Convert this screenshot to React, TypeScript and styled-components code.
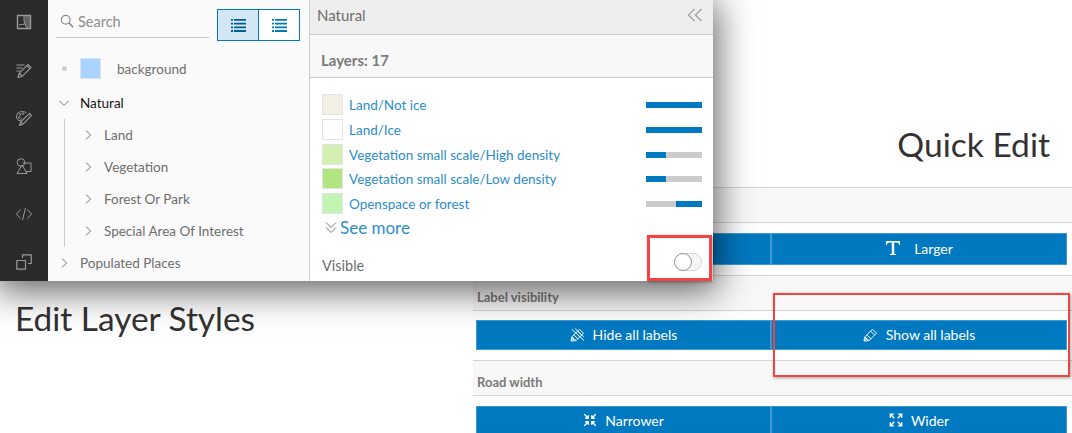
import { ReactNode } from "react"
import styled, { createGlobalStyle } from "styled-components"

const GlobalStyle = createGlobalStyle`
    html, body {
        margin: 0;
        padding: 0;
        background: #fff;
        font-family: Lato, "Open Sans", sans-serif;
    }
`

const Page = styled.div`
    position: relative;
    display: grid;
    grid-template-columns: 473px 1fr;
    width: 1072px;
    height: 433px;
    overflow: hidden;
    background: #fff;
`

const Window = styled.div`
    position: absolute;
    top: 0;
    left: 0;
    z-index: 2;
    display: flex;
    width: 713px;
    height: 281px;
    background: #fff;
    box-shadow: 0 6px 34px 4px rgba(0, 0, 0, 0.62);
`

const Rail = styled.div`
    display: flex;
    flex-direction: column;
    flex: 0 0 48px;
    margin-top: -2px;
    background: #2b2b2b;
`

const RailItem = styled.div`
    display: flex;
    flex: 0 0 48px;
    align-items: center;
    justify-content: center;
    color: #9a9a9a;
`

const LayerPane = styled.div`
    flex: 0 0 260px;
    background: #fafafa;
    color: #6e6e6e;
`

const SearchBar = styled.div`
    display: flex;
    gap: 8px;
    height: 49px;
    padding: 9px 9px 0 8px;
    box-sizing: border-box;
`

const SearchField = styled.div`
    display: flex;
    align-items: center;
    gap: 4px;
    width: 153px;
    height: 29px;
    padding: 0 0 4px 4px;
    box-sizing: border-box;
    border-bottom: 1px solid #c8c8c8;
    font-size: 14.5px;
    color: #8c8c8c;
`

const ViewToggle = styled.div`
    display: flex;
    width: 83px;
    height: 32px;
    box-sizing: border-box;
    border: 1px solid #0079c1;
`

const ViewButton = styled.div<{ $active?: boolean }>`
    display: flex;
    flex: 1;
    align-items: center;
    justify-content: center;
    color: ${(p) => (p.$active ? "#005e95" : "#0079c1")};
    background: ${(p) => (p.$active ? "#d2e6f5" : "#fff")};
    & + & {
        border-left: 1px solid #0079c1;
    }
`

const TreeRow = styled.div<{ $selected?: boolean }>`
    display: flex;
    align-items: center;
    gap: 10px;
    height: 32px;
    padding-left: 10px;
    font-size: 13.5px;
    color: ${(p) => (p.$selected ? "#151515" : "#6e6e6e")};
`

const BasemapRow = styled.div`
    display: flex;
    align-items: center;
    height: 38px;
    padding-left: 14px;
    font-size: 13.5px;
`

const BasemapName = styled.span`
    padding-top: 2px;
`

const Dot = styled.span`
    width: 5px;
    height: 5px;
    margin-right: 13px;
    border-radius: 50%;
    background: #d0d0d0;
`

const BasemapSwatch = styled.span`
    width: 19px;
    height: 19px;
    margin-right: 16px;
    border: 1px solid #d8e4ee;
    background: #a8d4fd;
`

const Nested = styled.div`
    margin-left: 16px;
    padding-left: 7px;
    border-left: 1px solid #ccc;
`

const DetailPane = styled.div`
    display: flex;
    flex-direction: column;
    flex: 1;
    border-left: 1px solid #ccc;
    background: #fff;
`

const PaneHeader = styled.div`
    display: flex;
    align-items: center;
    justify-content: space-between;
    flex: 0 0 35px;
    padding: 0 10px 4px 7px;
    box-sizing: border-box;
    border-bottom: 1px solid #ccc;
    background: #eee;
    font-size: 15px;
    color: #6e6e6e;
`

const LayerCount = styled.div`
    display: flex;
    align-items: flex-end;
    flex: 0 0 43px;
    padding: 0 0 8px 11px;
    box-sizing: border-box;
    border-bottom: 1px solid #ccc;
    background: #f8f8f8;
    font-size: 15px;
    font-weight: 700;
    color: #7a7a7a;
`

const LegendList = styled.div`
    padding: 16px 11px 0 12px;
`

const LegendRow = styled.div`
    display: flex;
    align-items: flex-start;
    height: 24.75px;
`

const LegendSwatch = styled.span<{ $color: string }>`
    flex: 0 0 auto;
    width: 19px;
    height: 19px;
    margin-right: 6px;
    border: 1px solid #e4e4e4;
    background: ${(p) => p.$color};
`

const LegendName = styled.span`
    flex: 1;
    line-height: 22px;
    font-size: 13.5px;
    color: #2b8dcb;
`

const ScaleBar = styled.span<{ $from: number; $to: number }>`
    flex: 0 0 56px;
    height: 6px;
    margin-top: 8px;
    background: linear-gradient(
        to right,
        #ccc ${(p) => p.$from}%,
        #0079c1 ${(p) => p.$from}%,
        #0079c1 ${(p) => p.$to}%,
        #ccc ${(p) => p.$to}%
    );
`

const SeeMore = styled.div`
    display: flex;
    align-items: center;
    gap: 3px;
    height: 22px;
    padding-left: 15px;
    margin-top: -1px;
    font-size: 17px;
    color: #2b8dcb;
`

const VisibleRow = styled.div`
    display: flex;
    align-items: center;
    justify-content: space-between;
    margin-top: auto;
    height: 32px;
    padding: 0 11px 0 12px;
    box-sizing: border-box;
    font-size: 14.5px;
    color: #6e6e6e;
`

const Switch = styled.span`
    position: relative;
    width: 28px;
    height: 18px;
    margin-bottom: 6px;
    box-sizing: border-box;
    border: 1px solid #d8d8d8;
    border-radius: 9px;
    background: #f6f6f6;

    &::before {
        content: "";
        position: absolute;
        top: -1px;
        left: -1px;
        width: 18px;
        height: 18px;
        box-sizing: border-box;
        border: 1.5px solid #949494;
        border-radius: 50%;
        background: #fff;
    }
`

const Caption = styled.h2`
    margin: 0;
    padding: 299px 0 0 15px;
    line-height: 38px;
    font-size: 33.4px;
    font-weight: 400;
    color: #323232;
`

const QuickColumn = styled.div`
    display: flex;
    flex-direction: column;
`

const QuickHeading = styled.h2`
    display: flex;
    align-items: flex-end;
    justify-content: flex-end;
    flex: 0 0 187px;
    margin: 0;
    padding: 0 22px 24px 0;
    box-sizing: border-box;
    line-height: 38px;
    font-size: 33.6px;
    font-weight: 400;
    color: #323232;
`

const SectionLabel = styled.div`
    display: flex;
    align-items: flex-end;
    height: 36px;
    padding: 0 0 5px 4px;
    box-sizing: border-box;
    border-top: 1px solid #d4d4d4;
    border-bottom: 1px solid #d4d4d4;
    background: #f8f8f8;
    font-size: 13px;
    font-weight: 700;
    color: #7a7a7a;
`

const ButtonRow = styled.div<{ $height: number; $top: number }>`
    display: grid;
    grid-template-columns: 295px 296px;
    height: ${(p) => p.$height}px;
    padding: ${(p) => p.$top}px 5px 10px 3px;
    box-sizing: border-box;
    background: #fff;
`

const ActionButton = styled.div`
    display: flex;
    align-items: center;
    justify-content: center;
    gap: 8px;
    padding-bottom: 2px;
    box-sizing: border-box;
    border: 1px solid #3f9ad3;
    background: #0079c1;
    font-size: 14px;
    color: #fff;
`

const Highlight = styled.div<{ $left: number; $top: number; $width: number; $height: number; $line: number }>`
    position: absolute;
    z-index: 3;
    left: ${(p) => p.$left}px;
    top: ${(p) => p.$top}px;
    width: ${(p) => p.$width}px;
    height: ${(p) => p.$height}px;
    box-sizing: border-box;
    border: ${(p) => p.$line}px solid #f54242;
    box-shadow: 1px 1px 3px rgba(0, 0, 0, 0.35);
`

const SerifGlyph = styled.svg`
    margin-right: 5px;
`

function Icon({ size = 16, sw = 1, children }: { size?: number; sw?: number; children: ReactNode }) {
    return (
        <svg width={size} height={size} viewBox="0 0 16 16" fill="none" stroke="currentColor" strokeWidth={sw}>
            {children}
        </svg>
    )
}

const Chevron = ({ open }: { open?: boolean }) => (
    <svg width="12" height="12" viewBox="0 0 12 12" fill="none" stroke="#777" strokeWidth="1">
        <path d={open ? "M1.5 4 6 8.5 10.5 4" : "M4 1.5 8.5 6 4 10.5"} />
    </svg>
)

const ListIcon = () => (
    <svg width="15" height="13" viewBox="0 0 15 13" fill="currentColor">
        <path d="M0 0h2v1.8H0zM3 0h12v1.8H3zM0 3.7h2v1.8H0zM3 3.7h12v1.8H3zM0 7.4h2v1.8H0zM3 7.4h12v1.8H3zM0 11.1h2v1.8H0zM3 11.1h12v1.8H3z" />
    </svg>
)

const railIcons = [
    <Icon key="basemap">
        <path d="M1.5 1.5h13v13h-13z" strokeWidth="1.4" />
        <path d="M8 2v5l1 3-6 1M9 10l2 4" />
        <path d="M9 2h5.2v12H11l-2-4-1-3z" fill="currentColor" opacity=".5" stroke="none" />
    </Icon>,
    <Icon key="edit">
        <path d="M.5 3h8M.5 6h6M.5 9h4" />
        <path d="M2 15.5l1.2-4.3L12 2.5l3 3-8.8 8.8zM3.2 11.2l3 3M10.8 3.7l3 3" strokeWidth="1.1" />
    </Icon>,
    <Icon key="palette">
        <path d="M10.5 3C8.5 .8 .8 .8 .5 6c-.1 3.2 2.2 5 3.8 4.6 1.2-.3.6-1.6 1.4-2.2" />
        <circle cx="4" cy="4.5" r=".8" /><circle cx="3.2" cy="7.5" r=".8" /><circle cx="7" cy="3.6" r=".8" />
        <path d="M3.5 15.5l1.3-3.7L13.5 3.5l2 2-8.4 8.6zM4.8 11.8l2.3 2.3" strokeWidth="1.1" />
    </Icon>,
    <Icon key="shapes">
        <circle cx="5" cy="4.5" r="3.8" />
        <path d="M7 5h8v8.5H10" />
        <path d="M1 15.5 6 7l5 8.5z" />
    </Icon>,
    <Icon key="code">
        <path d="M4.5 3.5 0.5 8l4 4.5M11.5 3.5l4 4.5-4 4.5M9.5 2 6.5 14" />
    </Icon>,
    <Icon key="copy" sw={1.2}>
        <path d="M.8 6.5h8.7v8.7H.8z" />
        <path d="M6.5 4V.8h8.7v8.7h-3.2" />
    </Icon>,
]

const legend = [
    { name: "Land/Not ice", color: "#f3efe5", from: 0, to: 100 },
    { name: "Land/Ice", color: "#ffffff", from: 0, to: 100 },
    { name: "Vegetation small scale/High density", color: "#d2f0b0", from: 0, to: 36 },
    { name: "Vegetation small scale/Low density", color: "#b2e482", from: 0, to: 36 },
    { name: "Openspace or forest", color: "#c2f4b4", from: 54, to: 100 },
]

const PencilIcon = ({ off }: { off?: boolean }) => (
    <Icon size={15}>
        <path d="M1 15l1-4.5L10 2.5l4.5 4-8 8z" />
        <path d="M2 10.5l4.5 4M4 8.5l4.5 4M8 4.5l4.5 4" />
        <circle cx="3" cy="13" r=".8" />
        {off && <path d="M2 2.5l13 12M5.5 1.5l9 9" />}
    </Icon>
)

const ArrowsIn = () => (
    <Icon size={14} sw={1.6}>
        <path d="M1.5 1.5 6 6M6 2.5V6H2.5M14.5 1.5 10 6M10 2.5V6h3.5M1.5 14.5 6 10M6 13.5V10H2.5M14.5 14.5 10 10M10 13.5V10h3.5" />
    </Icon>
)

const ArrowsOut = () => (
    <Icon size={14} sw={1.6}>
        <path d="M6 6 1.5 1.5M1.5 5.5v-4h4M10 6l4.5-4.5M14.5 5.5v-4h-4M6 10l-4.5 4.5M1.5 10.5v4h4M10 10l4.5 4.5M14.5 10.5v4h-4" />
    </Icon>
)

const SerifT = ({ size }: { size: number }) => (
    <SerifGlyph width={size} height={size} viewBox="0 0 16 16" fill="currentColor">
        <path d="M1 1h14v4h-.8c-.3-1.6-1-2.6-3-2.6H9.2v10.6c0 .8.4 1 1.8 1.1v.9H5v-.9c1.4-.1 1.8-.3 1.8-1.1V2.4H4.8c-2 0-2.7 1-3 2.6H1z" />
    </SerifGlyph>
)

export default function App() {
    return (
        <Page>
            <GlobalStyle />
            <Window>
                <Rail>
                    {railIcons.map((icon, i) => (
                        <RailItem key={i}>{icon}</RailItem>
                    ))}
                </Rail>
                <LayerPane>
                    <SearchBar>
                        <SearchField>
                            <Icon size={14} sw={1.3}>
                                <circle cx="6.5" cy="6.5" r="5" />
                                <path d="M10 10l5 5" strokeWidth="1.8" />
                            </Icon>
                            Search
                        </SearchField>
                        <ViewToggle>
                            <ViewButton $active><ListIcon /></ViewButton>
                            <ViewButton><ListIcon /></ViewButton>
                        </ViewToggle>
                    </SearchBar>
                    <BasemapRow>
                        <Dot />
                        <BasemapSwatch />
                        <BasemapName>background</BasemapName>
                    </BasemapRow>
                    <TreeRow $selected><Chevron open />Natural</TreeRow>
                    <Nested>
                        {["Land", "Vegetation", "Forest Or Park", "Special Area Of Interest"].map((name) => (
                            <TreeRow key={name}><Chevron />{name}</TreeRow>
                        ))}
                    </Nested>
                    <TreeRow><Chevron />Populated Places</TreeRow>
                </LayerPane>
                <DetailPane>
                    <PaneHeader>
                        Natural
                        <svg width="16" height="14" viewBox="0 0 16 14" fill="none" stroke="#a8a8a8" strokeWidth="1.5">
                            <path d="M7.5 1 1.5 7l6 6M14.5 1l-6 6 6 6" />
                        </svg>
                    </PaneHeader>
                    <LayerCount>Layers: 17</LayerCount>
                    <LegendList>
                        {legend.map((item) => (
                            <LegendRow key={item.name}>
                                <LegendSwatch $color={item.color} />
                                <LegendName>{item.name}</LegendName>
                                <ScaleBar $from={item.from} $to={item.to} />
                            </LegendRow>
                        ))}
                    </LegendList>
                    <SeeMore>
                        <svg width="12" height="13" viewBox="0 0 12 13" fill="none" stroke="#777" strokeWidth="1">
                            <path d="M1 1.5 6 6.5l5-5M1 6.5l5 5 5-5" />
                        </svg>
                        See more
                    </SeeMore>
                    <VisibleRow>
                        Visible
                        <Switch />
                    </VisibleRow>
                </DetailPane>
            </Window>

            <Caption>Edit Layer Styles</Caption>

            <QuickColumn>
                <QuickHeading>Quick Edit</QuickHeading>
                <SectionLabel>Label size</SectionLabel>
                <ButtonRow $height={52} $top={10}>
                    <ActionButton><SerifT size={11} />Smaller</ActionButton>
                    <ActionButton><SerifT size={16} />Larger</ActionButton>
                </ButtonRow>
                <SectionLabel>Label visibility</SectionLabel>
                <ButtonRow $height={49} $top={9}>
                    <ActionButton><PencilIcon off />Hide all labels</ActionButton>
                    <ActionButton><PencilIcon />Show all labels</ActionButton>
                </ButtonRow>
                <SectionLabel>Road width</SectionLabel>
                <ButtonRow $height={50} $top={10}>
                    <ActionButton><ArrowsIn />Narrower</ActionButton>
                    <ActionButton><ArrowsOut />Wider</ActionButton>
                </ButtonRow>
            </QuickColumn>

            <Highlight $left={647} $top={235} $width={65} $height={46} $line={3} />
            <Highlight $left={773} $top={293} $width={297} $height={84} $line={2} />
        </Page>
    )
}
